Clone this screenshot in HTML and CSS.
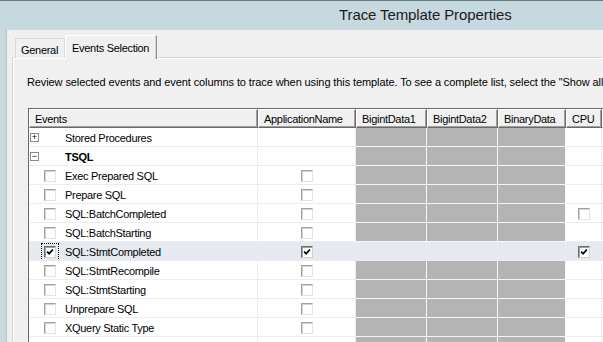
FILE: index.html
```html
<!DOCTYPE html>
<html lang="en">
<head>
  <meta charset="UTF-8">
  <title>Trace Template Properties</title>
  <link rel="stylesheet" href="styles.css">
</head>
<body>
  <div class="window">
    <div class="titlebar">Trace Template Properties</div>

    <div class="client">
      <div class="tabs">
        <div class="tab">General</div>
        <div class="tab active">Events Selection</div>
      </div>

      <div class="page">
        <p class="hint">Review selected events and event columns to trace when using this template. To see a complete list, select the "Show all events" and "Show all columns" options.</p>

        <table class="grid">
          <colgroup>
            <col class="c-event">
            <col class="c-app">
            <col class="c-big">
            <col class="c-big">
            <col class="c-bin">
            <col class="c-cpu">
            <col class="c-more">
          </colgroup>
          <thead>
            <tr>
              <th>Events</th>
              <th>ApplicationName</th>
              <th>BigintData1</th>
              <th>BigintData2</th>
              <th>BinaryData</th>
              <th>CPU</th>
              <th>Duration</th>
            </tr>
          </thead>
          <tbody>
            <tr>
              <td><div class="ev"><span class="lead"><span class="tree">+</span></span>Stored Procedures</div></td>
              <td></td><td class="off"></td><td class="off"></td><td class="off"></td><td></td><td></td>
            </tr>
            <tr class="cat">
              <td><div class="ev"><span class="lead"><span class="tree">&minus;</span></span>TSQL</div></td>
              <td></td><td class="off"></td><td class="off"></td><td class="off"></td><td></td><td></td>
            </tr>
            <tr>
              <td><div class="ev"><span class="lead"><span class="cb"></span></span>Exec Prepared SQL</div></td>
              <td class="mid"><span class="cb"></span></td><td class="off"></td><td class="off"></td><td class="off"></td><td></td><td></td>
            </tr>
            <tr>
              <td><div class="ev"><span class="lead"><span class="cb"></span></span>Prepare SQL</div></td>
              <td class="mid"><span class="cb"></span></td><td class="off"></td><td class="off"></td><td class="off"></td><td></td><td></td>
            </tr>
            <tr>
              <td><div class="ev"><span class="lead"><span class="cb"></span></span>SQL:BatchCompleted</div></td>
              <td class="mid"><span class="cb"></span></td><td class="off"></td><td class="off"></td><td class="off"></td><td class="mid"><span class="cb"></span></td><td></td>
            </tr>
            <tr>
              <td><div class="ev"><span class="lead"><span class="cb"></span></span>SQL:BatchStarting</div></td>
              <td class="mid"><span class="cb"></span></td><td class="off"></td><td class="off"></td><td class="off"></td><td></td><td></td>
            </tr>
            <tr class="selected">
              <td><div class="ev"><span class="lead"><span class="cb on focus"><svg viewBox="0 0 12 12"><path d="M2.5 5.5 L5 8 L9.5 3"/></svg></span></span>SQL:StmtCompleted</div></td>
              <td class="mid"><span class="cb on"><svg viewBox="0 0 12 12"><path d="M2.5 5.5 L5 8 L9.5 3"/></svg></span></td><td></td><td></td><td></td>
              <td class="mid"><span class="cb on"><svg viewBox="0 0 12 12"><path d="M2.5 5.5 L5 8 L9.5 3"/></svg></span></td><td></td>
            </tr>
            <tr>
              <td><div class="ev"><span class="lead"><span class="cb"></span></span>SQL:StmtRecompile</div></td>
              <td class="mid"><span class="cb"></span></td><td class="off"></td><td class="off"></td><td class="off"></td><td></td><td></td>
            </tr>
            <tr>
              <td><div class="ev"><span class="lead"><span class="cb"></span></span>SQL:StmtStarting</div></td>
              <td class="mid"><span class="cb"></span></td><td class="off"></td><td class="off"></td><td class="off"></td><td></td><td></td>
            </tr>
            <tr>
              <td><div class="ev"><span class="lead"><span class="cb"></span></span>Unprepare SQL</div></td>
              <td class="mid"><span class="cb"></span></td><td class="off"></td><td class="off"></td><td class="off"></td><td></td><td></td>
            </tr>
            <tr>
              <td><div class="ev"><span class="lead"><span class="cb"></span></span>XQuery Static Type</div></td>
              <td class="mid"><span class="cb"></span></td><td class="off"></td><td class="off"></td><td class="off"></td><td></td><td></td>
            </tr>
            <tr class="cat">
              <td><div class="ev"><span class="lead"><span class="tree">+</span></span>Transactions</div></td>
              <td></td><td class="off"></td><td class="off"></td><td class="off"></td><td></td><td></td>
            </tr>
          </tbody>
        </table>
      </div>
    </div>
  </div>
</body>
</html>
```

FILE: styles.css
```css
* { box-sizing: border-box; margin: 0; padding: 0; }

body {
  width: 603px;
  height: 342px;
  overflow: hidden;
  font-family: "Liberation Sans", Arial, sans-serif;
  font-size: 11px;
  letter-spacing: -0.3px;
  color: #000;
  background: #c6d9df;
}

.window {
  height: 100%;
  display: flex;
  flex-direction: column;
}

.titlebar {
  height: 30px;
  flex-shrink: 0;
  border-top: 1px solid #6e7c80;
  padding: 5px 0 0 339px;
  font-size: 15px;
  letter-spacing: -0.1px;
  color: #1b1b1b;
  white-space: nowrap;
}

.client {
  flex: 1;
  margin-left: 6px;
  background: #f0f0f0;
  border-left: 1px solid #b3c3c8;
  overflow: hidden;
}

/* tab strip */
.tabs {
  display: flex;
  align-items: flex-end;
  height: 28px;
  padding-left: 8px;
}

.tab {
  height: 20px;
  padding: 5px 6px 0 5px;
  border: 1px solid #d9d9d9;
  border-bottom: none;
  background: #f0f0f0;
  white-space: nowrap;
}

.tab.active {
  height: 24px;
  margin-bottom: -1px;
  padding: 6px 7px 0 6px;
  border-color: #fff #8f8f8f #f0f0f0 #fff;
  box-shadow: inset -1px 0 #d3d3d3;
  position: relative;
  z-index: 1;
}

.page {
  margin-left: 6px;
  border-top: 1px solid #fff;
  border-left: 1px solid #fff;
  box-shadow: -1px -1px #d7d7d7;
  padding: 16px 0 0 13px;
}

.hint {
  line-height: 14px;
  letter-spacing: -0.1px;
  white-space: nowrap;
}

/* events grid */
.grid {
  margin: 19px 0 0 1px;
  table-layout: fixed;
  border-collapse: separate;
  border-spacing: 0;
  border-top: 1px solid #696969;
  border-left: 1px solid #696969;
  background: #fff;
  width: 654px;
}

.c-event { width: 229px; }
.c-app { width: 98px; }
.c-big { width: 71px; }
.c-bin { width: 68px; }
.c-cpu { width: 36px; }
.c-more { width: 81px; }

th {
  height: 19px;
  padding: 0 0 0 5px;
  font-weight: normal;
  text-align: left;
  background: #f0f0f0;
  border-top: 1px solid #fff;
  border-left: 1px solid #fff;
  border-right: 1px solid #696969;
  border-bottom: 1px solid #696969;
  box-shadow: inset -1px -1px #a0a0a0;
  white-space: nowrap;
  overflow: hidden;
}

td {
  height: 19px;
  padding: 0;
  border-right: 1px solid #ececec;
  border-bottom: 1px solid #ececec;
  white-space: nowrap;
  overflow: hidden;
  vertical-align: middle;
}

td.off {
  background: #b4b4b4;
  border-color: #f6f6f6;
}

td.mid { text-align: center; }
td.mid .cb { margin-left: 1px; }

.ev {
  display: flex;
  align-items: center;
  height: 18px;
  padding-top: 1px;
}

tr.cat .ev { font-weight: bold; }

tr.selected td { background: #e5eaf0; }

.lead {
  display: flex;
  align-items: center;
  width: 36px;
  flex-shrink: 0;
}

.tree {
  display: flex;
  align-items: center;
  justify-content: center;
  width: 9px;
  height: 9px;
  margin-left: 1px;
  border: 1px solid #8c8c8c;
  background: #fff;
  font-size: 9px;
  line-height: 1;
  font-weight: normal;
  letter-spacing: 0;
  color: #000;
}

.cb {
  display: inline-block;
  width: 12px;
  height: 12px;
  border: 1px solid;
  border-color: #a0a0a0 #e3e3e3 #e3e3e3 #a0a0a0;
  box-shadow: inset 1px 1px #d4d4d4;
  background: #fff;
  vertical-align: middle;
}

.lead .cb { margin-left: 15px; }

.cb.on {
  border-color: #6d6d6d #d0d0d0 #d0d0d0 #6d6d6d;
  box-shadow: inset 1px 1px #a0a0a0;
}

.cb svg {
  display: block;
  width: 10px;
  height: 10px;
}

.cb svg path {
  fill: none;
  stroke: #000;
  stroke-width: 2;
}

.cb.focus {
  outline: 1px dotted #000;
  outline-offset: 2px;
}
```
